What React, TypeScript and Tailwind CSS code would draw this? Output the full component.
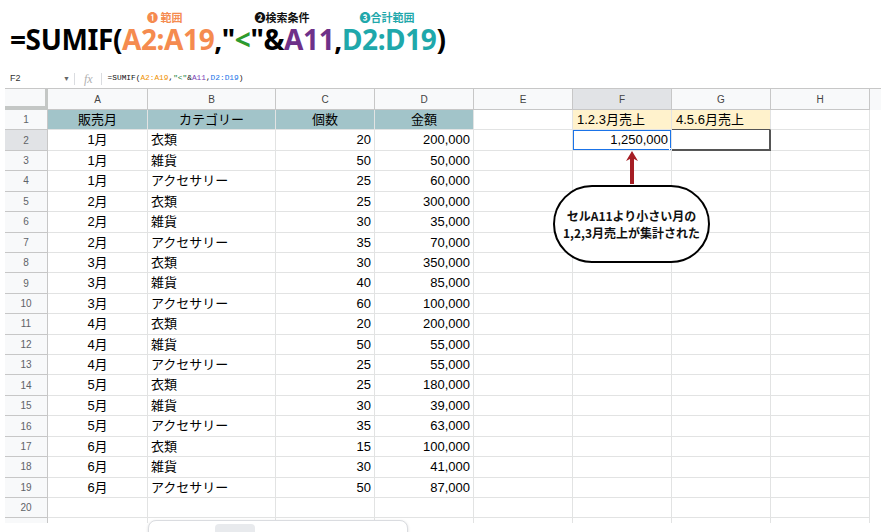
import React from "react";

const data: [string, string, string, string][] = [
  ["1月", "衣類", "20", "200,000"],
  ["1月", "雑貨", "50", "50,000"],
  ["1月", "アクセサリー", "25", "60,000"],
  ["2月", "衣類", "25", "300,000"],
  ["2月", "雑貨", "30", "35,000"],
  ["2月", "アクセサリー", "35", "70,000"],
  ["3月", "衣類", "30", "350,000"],
  ["3月", "雑貨", "40", "85,000"],
  ["3月", "アクセサリー", "60", "100,000"],
  ["4月", "衣類", "20", "200,000"],
  ["4月", "雑貨", "50", "55,000"],
  ["4月", "アクセサリー", "25", "55,000"],
  ["5月", "衣類", "25", "180,000"],
  ["5月", "雑貨", "30", "39,000"],
  ["5月", "アクセサリー", "35", "63,000"],
  ["6月", "衣類", "15", "100,000"],
  ["6月", "雑貨", "30", "41,000"],
  ["6月", "アクセサリー", "50", "87,000"],
];

const gridCols =
  "grid grid-cols-[43px_100px_128px_99px_99px_99px_99px_99px_99px]";
const cell =
  "border-r border-b border-[#e2e3e3] flex items-center overflow-hidden whitespace-nowrap";

function Row({ r }: { r: number }) {
  const d = r >= 2 && r <= 19 ? data[r - 2] : null;
  const isHead = r === 1;
  return (
    <div className={`${gridCols} h-[20.43px]`}>
      <div
        className={`border-r border-b border-[#c7c7c7] flex items-center justify-center text-[10px] text-[#5f6368] ${
          r === 2 ? "bg-[#e1e3e6]" : "bg-[#f8f9fa]"
        }`}
      >
        {r}
      </div>
      {isHead ? (
        <>
          <div className={`${cell} bg-[#a2c4c9] border-[#b5d0d4] justify-center`}>販売月</div>
          <div className={`${cell} bg-[#a2c4c9] border-[#b5d0d4] justify-center`}>カテゴリー</div>
          <div className={`${cell} bg-[#a2c4c9] border-[#b5d0d4] justify-center`}>個数</div>
          <div className={`${cell} bg-[#a2c4c9] border-[#b5d0d4] justify-center`}>金額</div>
        </>
      ) : (
        <>
          <div className={`${cell} justify-center`}>{d ? d[0] : ""}</div>
          <div className={`${cell} pl-[3px]`}>{d ? d[1] : ""}</div>
          <div className={`${cell} justify-end pr-[3px]`}>{d ? d[2] : ""}</div>
          <div className={`${cell} justify-end pr-[3px]`}>{d ? d[3] : ""}</div>
        </>
      )}
      <div className={cell}></div>
      {r === 1 ? (
        <div className={`${cell} bg-[#fff2cc] pl-[4px]`}>1.2.3月売上</div>
      ) : r === 2 ? (
        <div className={`${cell} relative justify-end pr-[3px]`}>
          1,250,000
          <div className="absolute inset-[-1px] border-2 border-[#1a73e8] pointer-events-none"></div>
          <div className="absolute right-[-4px] bottom-[-4px] w-[6px] h-[6px] bg-[#1a73e8] border border-white"></div>
        </div>
      ) : (
        <div className={cell}></div>
      )}
      {r === 1 ? (
        <div className={`${cell} bg-[#fff2cc] pl-[4px] border-b-[#555]`}>4.5.6月売上</div>
      ) : r === 2 ? (
        <div className={`${cell} border-r-[#555] border-b-[#555] border-r-2 border-b-2`}></div>
      ) : (
        <div className={cell}></div>
      )}
      <div className={cell}></div>
    </div>
  );
}

export default function App() {
  const rows = Array.from({ length: 21 }, (_, i) => i + 1);
  return (
    <div className="relative w-[881px] h-[532px] overflow-hidden bg-white font-['Liberation_Sans','Noto_Sans_CJK_JP',sans-serif] text-black">
      {/* Title */}
      <div className="h-[65px] pl-[10px] pt-[9px]">
        <div className="flex h-[16px] items-center text-[11px] font-bold font-['Noto_Sans_CJK_JP','Noto_Sans',sans-serif] leading-none">
          <span className="ml-[137px] text-[#f58b4f]">❶ 範囲</span>
          <span className="ml-[72px] text-[#111]">❷検索条件</span>
          <span className="ml-[50px] text-[#1fa8ab]">❸合計範囲</span>
        </div>
        <div className="h-[28px] text-[28px] font-bold leading-[28px] font-['Noto_Sans',sans-serif] whitespace-nowrap tracking-[-0.4px]">
          <span>=SUMIF(</span>
          <span className="text-[#f58b4f]">A2:A19</span>
          <span>,"</span>
          <span className="text-[#2e9a2e]">&lt;</span>
          <span>"&amp;</span>
          <span className="text-[#6e3189]">A11</span>
          <span>,</span>
          <span className="text-[#1fa8ab]">D2:D19</span>
          <span>)</span>
        </div>
      </div>

      {/* Formula bar */}
      <div className="h-[23px] flex items-center pt-[5px] pl-[10px] text-[9px] text-[#333]">
        <span className="w-[53px]">F2</span>
        <span className="text-[7px] text-[#666]">▼</span>
        <span className="ml-[4px] w-px h-[12px] bg-[#dadce0]"></span>
        <span className="ml-[9px] italic font-['Liberation_Serif',serif] text-[12px] text-[#b0b0b0]">fx</span>
        <span className="ml-[8px] w-px h-[12px] bg-[#dadce0]"></span>
        <span className="ml-[6px] font-['Liberation_Mono',monospace] text-[7.8px] text-[#111]">
          =SUMIF(<span className="text-[#f09300]">A2:A19</span>,<span className="text-[#188038]">"&lt;"</span>&amp;<span className="text-[#7b3fb5]">A11</span>,<span className="text-[#1a73e8]">D2:D19</span>)
        </span>
      </div>

      {/* Grid */}
      <div className="ml-[5px] h-[435px] overflow-hidden text-[13px]">
        <div className={`${gridCols} h-[22px] border-t border-[#c7c7c7] bg-[#f8f9fa] text-[10px] text-[#444]`}>
          <div className="border-r-[3px] border-b-[4px] border-[#c4c7c5] bg-[#f8f9fa]"></div>
          {["A", "B", "C", "D", "E", "F", "G", "H"].map((c) => (
            <div
              key={c}
              className={`border-r border-b border-[#c7c7c7] flex items-center justify-center ${
                c === "F" ? "bg-[#e1e3e6]" : ""
              }`}
            >
              {c}
            </div>
          ))}
        </div>
        {rows.map((r) => (
          <Row key={r} r={r} />
        ))}
      </div>

      {/* Arrow */}
      <svg className="absolute left-[624px] top-[150px]" width="16" height="36" viewBox="0 0 16 36">
        <rect x="6" y="8" width="4" height="26" fill="#a51d24" />
        <path d="M8 1 L14 11 L8 8 L2 11 Z" fill="#a51d24" />
      </svg>

      {/* Bubble */}
      <div className="absolute left-[553px] top-[185px] w-[157px] h-[78px] rounded-full border-2 border-black bg-white flex flex-col items-center justify-center text-[12px] font-bold leading-[17px] text-[#111] font-['Noto_Sans_CJK_JP',sans-serif]">
        <span>セルA11より小さい月の</span>
        <span>1,2,3月売上が集計された</span>
      </div>

      {/* Floating bottom box */}
      <div className="absolute left-[148px] top-[520px] w-[260px] h-[24px] bg-white border border-[#dadce0] rounded-[8px] shadow-[0_1px_3px_rgba(0,0,0,0.15)]">
        <div className="absolute left-[66px] top-[3px] w-[40px] h-[14px] rounded-[4px] bg-[#e8eaed]"></div>
      </div>
    </div>
  );
}
